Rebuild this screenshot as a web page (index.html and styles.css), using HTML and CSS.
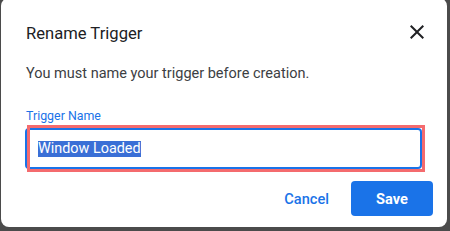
FILE: index.html
```html
<!DOCTYPE html>
<html lang="en">
<head>
<meta charset="utf-8">
<title>Rename Trigger</title>
<link rel="stylesheet" href="styles.css">
</head>
<body>
<div class="dialog">
  <div class="header">
    <div class="title">Rename Trigger</div>
    <button class="close" aria-label="Close">
      <svg viewBox="0 0 24 24" width="24" height="24"><path d="M19 6.41L17.59 5 12 10.59 6.41 5 5 6.41 10.59 12 5 17.59 6.41 19 12 13.41 17.59 19 19 17.59 13.41 12z" fill="#202124"/></svg>
    </button>
  </div>
  <p class="message">You must name your trigger before creation.</p>
  <label class="label">Trigger Name</label>
  <div class="field">
    <div class="input"><span class="selected">Window Loaded</span></div>
    <div class="highlight"></div>
  </div>
  <div class="actions">
    <button class="btn cancel">Cancel</button>
    <button class="btn save">Save</button>
  </div>
</div>
</body>
</html>
```
FILE: styles.css
```css
html, body {
  margin: 0;
  padding: 0;
  background: #4b4b4b;
  width: 450px;
  height: 231px;
  overflow: hidden;
  font-family: Roboto, "Liberation Sans", Arial, sans-serif;
}
.dialog {
  box-sizing: border-box;
  margin: -2px 3px 0 1px;
  height: 229px;
  background: #ffffff;
  border-radius: 8px;
  padding: 24px 24px 0 24px;
}
.header {
  display: flex;
  justify-content: space-between;
  align-items: flex-start;
  height: 24px;
}
.title {
  font-size: 16.6px;
  line-height: 24px;
  color: #202124;
  font-weight: 400;
  padding-left: 1px;
}
.close {
  border: 0;
  background: none;
  padding: 0;
  width: 24px;
  height: 24px;
  margin: -2px -6px 0 0;
  display: flex;
}
.message {
  margin: 18px 0 0 0;
  font-size: 14.5px;
  line-height: 20px;
  color: #3c4043;
  padding-left: 1px;
}
.label {
  display: block;
  margin-top: 24px;
  font-size: 12.4px;
  line-height: 16px;
  color: #1a73e8;
  padding-left: 1px;
}
.field {
  position: relative;
  margin-top: 4px;
  width: 397px;
}
.input {
  box-sizing: border-box;
  height: 41px;
  border: 2px solid #1a73e8;
  border-radius: 4px;
  padding: 0 11px;
  display: flex;
  align-items: center;
  font-size: 14.4px;
  color: #202124;
}
.selected {
  background: #3a6fd6;
  color: #ffffff;
  line-height: 16px;
}
.highlight {
  position: absolute;
  left: 2px;
  top: -3px;
  width: 398px;
  height: 47px;
  box-sizing: border-box;
  border: 3px solid #f46b6e;
  pointer-events: none;
}
.actions {
  display: flex;
  justify-content: flex-end;
  align-items: center;
  gap: 6px;
  margin: 12px -10px 0 0;
}
.btn {
  font-family: Roboto, "Liberation Sans", Arial, sans-serif;
  font-size: 14.6px;
  font-weight: 500;
  height: 35px;
  border: 0;
  border-radius: 4px;
  cursor: pointer;
}
.cancel {
  background: none;
  color: #1a73e8;
  padding: 0 16px;
}
.save {
  background: #1a73e8;
  color: #ffffff;
  width: 82px;
  font-weight: 700;
}
```
